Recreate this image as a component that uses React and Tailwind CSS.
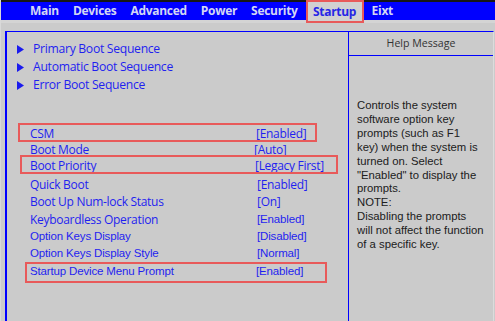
export default function App() {
  const os = "font-['Open_Sans',sans-serif] text-[12px] tracking-[-0.3px]";
  const ls = "font-['Liberation_Sans',Arial,sans-serif] text-[11.5px] tracking-[-0.15px]";
  const rows = [
    { label: "CSM", value: "[Enabled]", mt: "mt-[32px]", lf: os, vf: os, vx: "pl-[0px]", box: "left-[11px] -top-[3px] w-[299px] h-[19px]" },
    { label: "Boot Mode", value: "[Auto]", mt: "mt-[0px]", lf: os, vf: os, vx: "-ml-[2px]" },
    { label: "Boot Priority", value: "[Legacy First]", mt: "mt-[0px]", lf: os, vf: os, vx: "-ml-[1px]", box: "left-[13px] -top-[3px] w-[318px] h-[19px]" },
    { label: "Quick Boot", value: "[Enabled]", mt: "mt-[3px]", lf: os, vf: os, vx: "ml-[1px]" },
    { label: "Boot Up Num-lock Status", value: "[On]", mt: "mt-[1px]", lf: os, vf: os, vx: "ml-[1px]" },
    { label: "Keyboardless Operation", value: "[Enabled]", mt: "mt-[2px]", lf: os, vf: ls, vx: "ml-[1px]" },
    { label: "Option Keys Display", value: "[Disabled]", mt: "mt-[1px]", lf: ls, vf: ls, vx: "ml-[1px]" },
    { label: "Option Keys Display Style", value: "[Normal]", mt: "mt-[1px]", lf: ls, vf: ls, vx: "ml-[1px]" },
    { label: "Startup Device Menu Prompt", value: "[Enabled]", mt: "mt-[2px]", lf: ls, vf: ls, vx: "pl-[0px]", box: "left-[18px] -top-[2px] w-[302px] h-[21px]" },
  ];
  const upper = ["Primary Boot Sequence", "Automatic Boot Sequence", "Error Boot Sequence"];
  const help = [
    "Controls the system",
    "software option key",
    "prompts (such as F1",
    "key) when the system is",
    "turned on. Select",
    "\"Enabled\" to display the",
    "prompts.",
    "NOTE:",
    "Disabling the prompts",
    "will not affect the function",
    "of a specific key.",
  ];
  return (
    <div className="w-[495px] h-[321px] bg-[#cbcbcb] overflow-hidden flex flex-col border-l border-l-[#d9d9d9]">
      <div className="h-[2px] bg-[#161616] shrink-0" />
      <div className="h-[18px] bg-[#0000ff] flex items-center pl-[22px] font-['Open_Sans',sans-serif] font-bold text-[12px] tracking-[-0.3px] text-[#d3d7f3] shrink-0">
        <span className="px-[7px]">Main</span>
        <span className="px-[7px]">Devices</span>
        <span className="px-[7px]">Advanced</span>
        <span className="px-[7px]">Power</span>
        <span className="px-[7px]">Security</span>
        <span className="ml-[1px] self-start -mt-[2px] h-[23px] w-[58px] border-2 border-[#e85a5a] bg-[#d1d1d1] text-[#2626e6] flex items-center justify-center relative z-10">Startup</span>
        <span className="px-[8px]">Eixt</span>
      </div>
      <div className="h-[3px] bg-[#d4d4d4] shrink-0" />
      <div className="mt-[8px] ml-[4px] mr-[1px] flex-1 flex border-t border-l-2 border-[#0000ff] border-r border-r-[#dcdcdc]">
        <div className="w-[341px] shrink-0 pt-[8px] text-[#1f1ff0]">
          {upper.map((u) => (
            <div key={u} className={`h-[18px] flex items-center ${os}`}>
              <svg width="7" height="9" viewBox="0 0 7 9" className="ml-[10px] mr-[9px] shrink-0">
                <path d="M0 0 L7 4.5 L0 9 Z" fill="#1a1aee" />
              </svg>
              <span className="text-[12.2px]">{u}</span>
            </div>
          ))}
          {rows.map((r) => (
            <div key={r.label} className={`relative h-[16px] flex items-center pl-[23px] ${r.mt}`}>
              <span className={`w-[226px] whitespace-nowrap ${r.lf}`}>{r.label}</span>
              <span className={`whitespace-nowrap ${r.vf} ${r.vx}`}>{r.value}</span>
              {r.box && <div className={`absolute border-2 border-[#e85a5a] ${r.box}`} />}
            </div>
          ))}
        </div>
        <div className="flex-1 border-l border-[#0000ff] flex flex-col">
          <div className="h-[24px] border-b border-[#0000ff] flex items-center justify-center font-['Open_Sans',sans-serif] text-[10.6px] text-[#333] shrink-0">Help Message</div>
          <div className="pt-[43px] pl-[8px] font-['Liberation_Sans',Arial,sans-serif] text-[11.3px] leading-[13.9px] text-[#202020]">
            {help.map((h) => (
              <div key={h} className="whitespace-nowrap">{h}</div>
            ))}
          </div>
        </div>
      </div>
    </div>
  );
}
